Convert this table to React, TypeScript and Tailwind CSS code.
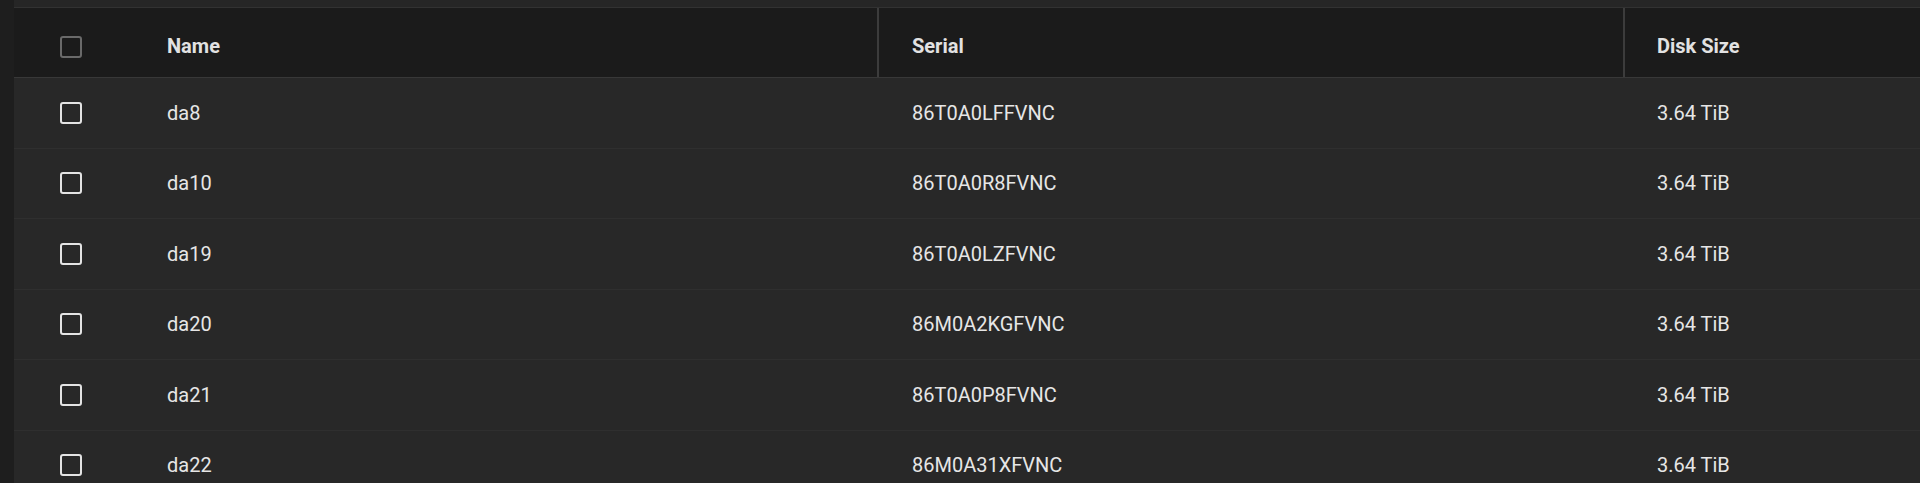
import React from "react";

interface Disk {
  name: string;
  serial: string;
  size: string;
}

const disks: Disk[] = [
  { name: "da8", serial: "86T0A0LFFVNC", size: "3.64 TiB" },
  { name: "da10", serial: "86T0A0R8FVNC", size: "3.64 TiB" },
  { name: "da19", serial: "86T0A0LZFVNC", size: "3.64 TiB" },
  { name: "da20", serial: "86M0A2KGFVNC", size: "3.64 TiB" },
  { name: "da21", serial: "86T0A0P8FVNC", size: "3.64 TiB" },
  { name: "da22", serial: "86M0A31XFVNC", size: "3.64 TiB" },
];

const Checkbox: React.FC<{ muted?: boolean }> = ({ muted }) => (
  <div
    className={
      "w-[22px] h-[22px] rounded-[3px] border-2 " +
      (muted ? "border-[#6a6a6a]" : "border-[#e4e4e4]")
    }
  />
);

const App: React.FC = () => {
  return (
    <div
      className="flex h-[483px] w-full overflow-hidden bg-[#1e1e1e] text-[20px]"
      style={{ fontFamily: "Roboto, 'Liberation Sans', sans-serif" }}
    >
      {/* barra lateral */}
      <div className="w-[14px] shrink-0 bg-[#1e1e1e]" />

      <div className="flex-1 flex flex-col">
        <div className="h-[8px] shrink-0 bg-[#262626] border-b border-[#323232]" />

        {/* cabecera */}
        <div className="grid grid-cols-[120px_743px_746px_1fr] h-[70px] shrink-0 bg-[#1b1b1b] border-b border-[#383838] text-[#e2e2e2] font-bold">
          <div className="flex items-center pl-[46px] pt-[9px]">
            <Checkbox muted />
          </div>
          <div className="flex items-center pl-[33px] pt-[6px]">Name</div>
          <div className="flex items-center pl-[33px] pt-[6px] border-l-2 border-[#3c3c3c]">Serial</div>
          <div className="flex items-center pl-[32px] pt-[6px] border-l-2 border-[#3c3c3c]">Disk Size</div>
        </div>

        {/* filas */}
        {disks.map((disk) => (
          <div
            key={disk.name}
            className="grid grid-cols-[120px_743px_746px_1fr] h-[70.5px] shrink-0 bg-[#282828] border-b border-[#2f2f2f] text-[#e6e6e6]"
          >
            <div className="flex items-center pl-[46px]">
              <Checkbox />
            </div>
            <div className="flex items-center pl-[33px]">{disk.name}</div>
            <div className="flex items-center pl-[35px]">{disk.serial}</div>
            <div className="flex items-center pl-[34px]">{disk.size}</div>
          </div>
        ))}
      </div>
    </div>
  );
};

export default App;
